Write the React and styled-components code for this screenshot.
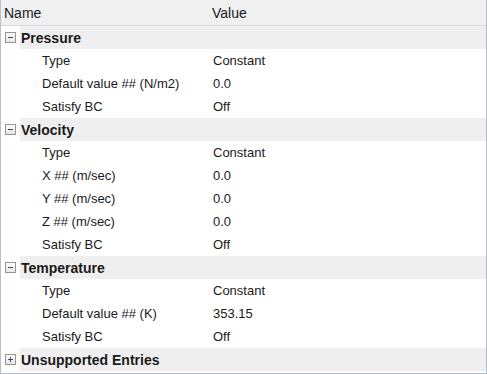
import React from 'react';
import styled, { createGlobalStyle } from 'styled-components';

const GlobalStyle = createGlobalStyle`
  html, body {
    margin: 0;
    padding: 0;
    background: #ffffff;
  }
  body {
    font-family: "Liberation Sans", Arial, sans-serif;
  }
`;

const Panel = styled.div`
  width: 487px;
  height: 374px;
  box-sizing: border-box;
  border: 1px solid #b4bfcb;
  border-top: none;
  background: #ffffff;
  overflow: hidden;
`;

const Header = styled.div`
  display: grid;
  grid-template-columns: 210px 1fr;
  height: 25px;
  align-items: center;
  background: #f0f0f0;
  border-bottom: 1px solid #d5d9de;
  font-size: 14px;
  color: #1a1a1a;
`;

const HeaderCell = styled.div`
  padding-left: ${(p) => p.$pad}px;
  padding-top: 1px;
`;

const GroupRow = styled.div`
  display: flex;
  align-items: center;
  height: 23px;
`;

const Toggle = styled.span`
  width: 11px;
  height: 11px;
  margin: 0 4px 0 4px;
  box-sizing: border-box;
  border: 1px solid #959595;
  background: linear-gradient(#fcfcfc, #e6e6e6);
  display: flex;
  align-items: center;
  justify-content: center;
  position: relative;
  flex: none;

  &::before {
    content: '';
    width: 5px;
    height: 1px;
    background: #3d4a66;
  }

  &::after {
    content: '';
    display: ${(p) => (p.$open ? 'none' : 'block')};
    position: absolute;
    left: 4px;
    top: 2px;
    width: 1px;
    height: 5px;
    background: #3d4a66;
  }
`;

const GroupLabel = styled.div`
  flex: 1;
  height: 100%;
  display: flex;
  align-items: center;
  background: #efefef;
  font-weight: bold;
  font-size: 14px;
  color: #1a1a1a;
  padding-left: 1px;
`;

const Row = styled.div`
  display: grid;
  grid-template-columns: 212px 1fr;
  height: 23px;
  align-items: center;
  font-size: 13px;
  color: #1a1a1a;
`;

const NameCell = styled.div`
  padding-left: 41px;
  white-space: nowrap;
`;

const ValueCell = styled.div`
  white-space: nowrap;
`;

const groups = [
  {
    name: 'Pressure',
    open: true,
    rows: [
      ['Type', 'Constant'],
      ['Default value ## (N/m2)', '0.0'],
      ['Satisfy BC', 'Off'],
    ],
  },
  {
    name: 'Velocity',
    open: true,
    rows: [
      ['Type', 'Constant'],
      ['X ## (m/sec)', '0.0'],
      ['Y ## (m/sec)', '0.0'],
      ['Z ## (m/sec)', '0.0'],
      ['Satisfy BC', 'Off'],
    ],
  },
  {
    name: 'Temperature',
    open: true,
    rows: [
      ['Type', 'Constant'],
      ['Default value ## (K)', '353.15'],
      ['Satisfy BC', 'Off'],
    ],
  },
  { name: 'Unsupported Entries', open: false, rows: [] },
];

export default function App() {
  return (
    <>
      <GlobalStyle />
      <Panel>
        <Header>
          <HeaderCell $pad={3}>Name</HeaderCell>
          <HeaderCell $pad={1}>Value</HeaderCell>
        </Header>
        {groups.map((g) => (
          <div key={g.name}>
            <GroupRow>
              <Toggle $open={g.open} />
              <GroupLabel>{g.name}</GroupLabel>
            </GroupRow>
            {g.open &&
              g.rows.map(([name, value]) => (
                <Row key={name}>
                  <NameCell>{name}</NameCell>
                  <ValueCell>{value}</ValueCell>
                </Row>
              ))}
          </div>
        ))}
      </Panel>
    </>
  );
}
